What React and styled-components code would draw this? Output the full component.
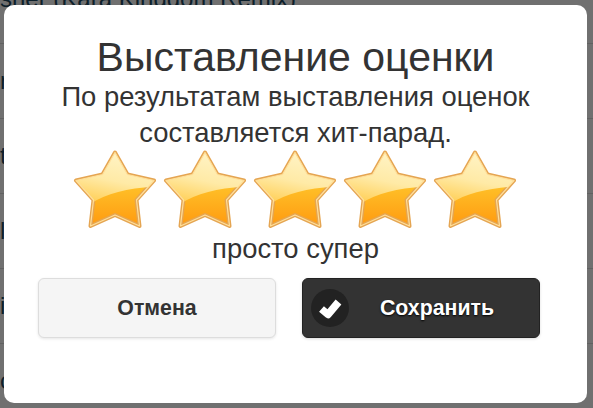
import React from 'react';
import styled, { createGlobalStyle } from 'styled-components';

const GlobalStyle = createGlobalStyle`
    html, body {
        margin: 0;
        padding: 0;
        height: 100%;
        overflow: hidden;
        background: #fff;
        font-family: 'Liberation Sans', Arial, sans-serif;
    }
`

const Page = styled.div`
    position: relative;
    width: 593px;
    height: 408px;
    overflow: hidden;
`
const TrackList = styled.div`
    display: flex;
    flex-direction: column;
    margin-top: -31px;
`
const TrackRow = styled.div`
    box-sizing: border-box;
    height: 75px;
    flex-shrink: 0;
    border-bottom: 1px solid #ddd;
    display: flex;
    align-items: center;
    padding-bottom: ${props => props.$lift || 0}px;
    font-size: 24px;
    color: #1f4a63;
    white-space: nowrap;
`
const Backdrop = styled.div`
    position: absolute;
    inset: 0;
    background: rgba(0, 0, 0, 0.56);
`
const Dialog = styled.div`
    position: absolute;
    left: 4px;
    top: 5px;
    width: 583px;
    height: 398px;
    box-sizing: border-box;
    background: #fff;
    border-radius: 10px;
    padding: 30px 34px 0;
    display: flex;
    flex-direction: column;
    align-items: center;
    color: #333;
`
const Title = styled.h1`
    margin: 0;
    font-size: 41px;
    line-height: 44px;
    font-weight: 400;
    white-space: nowrap;
`
const Subtitle = styled.p`
    margin: 0;
    width: 500px;
    text-align: center;
    font-size: 27.4px;
    line-height: 36px;
`
const Stars = styled.div`
    display: flex;
    margin-top: -1px;
    margin-right: 1px;
`
const StarIcon = styled.svg`
    display: block;
    width: 90px;
    height: 80px;
`
const RatingLabel = styled.div`
    font-size: 27.4px;
    line-height: 36px;
    margin-top: 1px;
`
const Buttons = styled.div`
    display: flex;
    gap: 26px;
    margin-top: 11px;
    margin-right: 13px;
`
const Button = styled.button`
    position: relative;
    box-sizing: border-box;
    width: 238px;
    height: 60px;
    border-radius: 6px;
    font-family: inherit;
    font-size: 21.3px;
    font-weight: 700;
    cursor: pointer;
`
const CancelButton = styled(Button)`
    background: #f5f5f5;
    border: 1px solid #ddd;
    color: #333;
    box-shadow: 0 1px 3px rgba(0, 0, 0, 0.1);
`
const SaveButton = styled(Button)`
    background: #333;
    border: 1px solid #222;
    color: #fff;
    padding-left: 38px;
    text-shadow: 0 1px 2px #000;
    box-shadow: 0 1px 3px rgba(0, 0, 0, 0.15);
`
const IconCircle = styled.span`
    position: absolute;
    left: 8px;
    top: 10px;
    width: 38px;
    height: 38px;
    border-radius: 50%;
    background: #222;
`
const CheckIcon = styled.svg`
    display: block;
    width: 38px;
    height: 38px;
`

const STAR_PATH = 'M45 2.5 L57.5 24.5 L84 30.5 L66.5 50 L69.5 76 L45 65 L20.5 76 L23.5 50 L6 30.5 L32.5 24.5 Z';

const Star = ({ id }) => (
    <StarIcon viewBox="0 0 90 80">
        <defs>
            <linearGradient id={`${id}-base`} x1="0" y1="0" x2="0" y2="1">
                <stop offset="0" stopColor="#ffc93c" />
                <stop offset="0.5" stopColor="#ffbd26" />
                <stop offset="1" stopColor="#ff9a10" />
            </linearGradient>
            <linearGradient id={`${id}-gloss`} gradientUnits="userSpaceOnUse" x1="45" y1="3" x2="35" y2="52">
                <stop offset="0" stopColor="#fff3c4" />
                <stop offset="0.55" stopColor="#ffeaa6" />
                <stop offset="1" stopColor="#ffd25f" />
            </linearGradient>
            <clipPath id={`${id}-clip`}>
                <path d={STAR_PATH} />
            </clipPath>
        </defs>
        <path d={STAR_PATH} fill={`url(#${id}-base)`} stroke="#e5a552" strokeWidth="4" strokeLinejoin="round" />
        <path
            d="M0 0 H90 V36 C60 38 38 42 20 54 L0 56 Z"
            fill={`url(#${id}-gloss)`}
            clipPath={`url(#${id}-clip)`}
        />
        <path d={STAR_PATH} fill="none" stroke="#ffdf9a" strokeWidth="1.2" strokeLinejoin="round" />
    </StarIcon>
);

const App = () => {
    return (
        <Page>
            <GlobalStyle />
            <TrackList>
                <TrackRow $lift={15}>sher (Kara Kingdom Remix)</TrackRow>
                <TrackRow>r</TrackRow>
                <TrackRow>t</TrackRow>
                <TrackRow>l</TrackRow>
                <TrackRow>i</TrackRow>
                <TrackRow>c</TrackRow>
            </TrackList>
            <Backdrop />
            <Dialog>
                <Title>Выставление оценки</Title>
                <Subtitle>По результатам выставления оценок составляется хит-парад.</Subtitle>
                <Stars>
                    {['a', 'b', 'c', 'd', 'e'].map(id => <Star key={id} id={id} />)}
                </Stars>
                <RatingLabel>просто супер</RatingLabel>
                <Buttons>
                    <CancelButton>Отмена</CancelButton>
                    <SaveButton>
                        <IconCircle>
                            <CheckIcon viewBox="0 0 38 38">
                                <path d="M10.5 20 L17 25.5 L27.5 13" fill="none" stroke="#fff" strokeWidth="7.5" strokeLinejoin="round" />
                            </CheckIcon>
                        </IconCircle>
                        Сохранить
                    </SaveButton>
                </Buttons>
            </Dialog>
        </Page>
    );
}

export default App;
